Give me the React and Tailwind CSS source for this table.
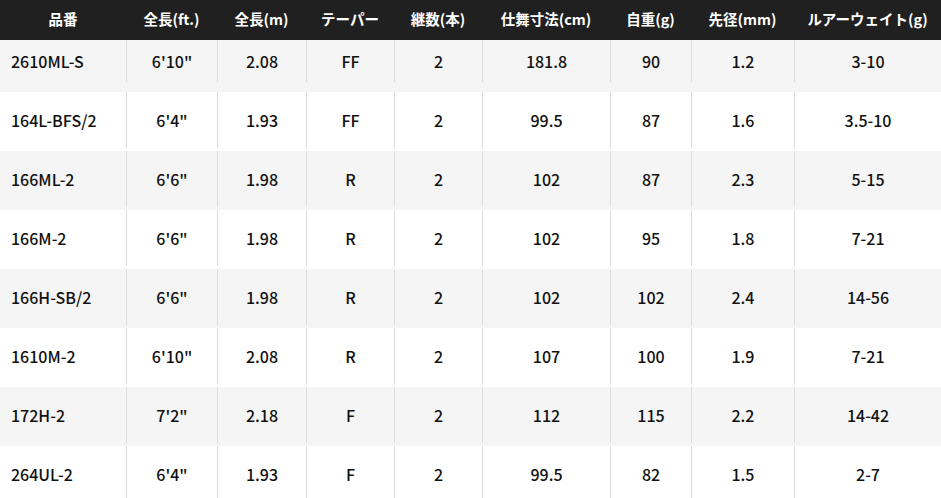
import React from "react";

const headers = [
  "品番",
  "全長(ft.)",
  "全長(m)",
  "テーパー",
  "継数(本)",
  "仕舞寸法(cm)",
  "自重(g)",
  "先径(mm)",
  "ルアーウェイト(g)",
];

const rows = [
  ["2610ML-S", "6'10\"", "2.08", "FF", "2", "181.8", "90", "1.2", "3-10"],
  ["164L-BFS/2", "6'4\"", "1.93", "FF", "2", "99.5", "87", "1.6", "3.5-10"],
  ["166ML-2", "6'6\"", "1.98", "R", "2", "102", "87", "2.3", "5-15"],
  ["166M-2", "6'6\"", "1.98", "R", "2", "102", "95", "1.8", "7-21"],
  ["166H-SB/2", "6'6\"", "1.98", "R", "2", "102", "102", "2.4", "14-56"],
  ["1610M-2", "6'10\"", "2.08", "R", "2", "107", "100", "1.9", "7-21"],
  ["172H-2", "7'2\"", "2.18", "F", "2", "112", "115", "2.2", "14-42"],
  ["264UL-2", "6'4\"", "1.93", "F", "2", "99.5", "82", "1.5", "2-7"],
];

const cols = "grid grid-cols-[126px_91px_89px_88px_88px_128px_81px_103px_147px]";

export default function App() {
  return (
    <div className="w-[941px] h-[498px] overflow-hidden bg-white font-['Noto_Sans_CJK_JP','Noto_Sans',sans-serif] text-[#111111]">
      <div className={`${cols} h-[40px] bg-[#202020] text-white text-[14.5px] font-bold`}>
        {headers.map((h) => (
          <div key={h} className="flex items-center justify-center pb-[2px] whitespace-nowrap">
            {h}
          </div>
        ))}
      </div>
      {rows.map((row, idx) => (
        <div
          key={idx}
          className={`${cols} ${idx === 0 ? "h-[52px] pb-[10px]" : "h-[59px] pb-[3px]"} ${
            idx % 2 === 0 ? "bg-[#f5f5f5]" : "bg-white"
          } text-[16px] font-medium`}
        >
          {row.map((cell, i) => (
            <div
              key={i}
              className={
                i === 0
                  ? "flex items-center pl-[11px] whitespace-nowrap"
                  : "flex items-center justify-center border-l border-[#dcdcdc] whitespace-nowrap"
              }
            >
              {cell}
            </div>
          ))}
        </div>
      ))}
    </div>
  );
}
